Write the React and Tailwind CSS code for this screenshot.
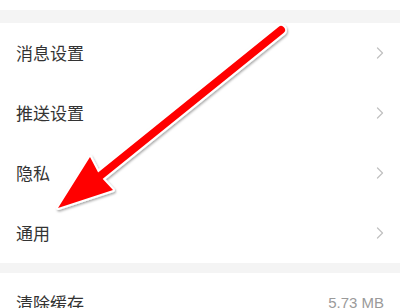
import React from 'react'

const rows = ['消息设置', '推送设置', '隐私', '通用']

function Chevron() {
  return (
    <svg width="8" height="12" viewBox="0 0 8 12" fill="none">
      <path d="M1.5 1 L6.5 6 L1.5 11" stroke="#c2c2c2" strokeWidth="1.3" strokeLinecap="round" strokeLinejoin="round" />
    </svg>
  )
}

export default function App() {
  return (
    <div className="relative w-[400px] h-[308px] overflow-hidden bg-white font-['Noto_Sans_CJK_SC','Noto_Sans',sans-serif]">
      <div className="h-[10px] bg-white" />
      <div className="h-[13px] bg-[#f4f4f4]" />
      {rows.map(label => (
        <div key={label} className="h-[60px] flex items-center justify-between pl-4 pr-4">
          <span className="text-[17px] text-[#333333]">{label}</span>
          <Chevron />
        </div>
      ))}
      <div className="h-[10px] bg-[#f4f4f4]" />
      <div className="h-[60px] flex items-center justify-between pl-4 pr-4">
        <span className="text-[17px] text-[#333333]">清除缓存</span>
        <span className="text-[15px] text-[#9a9a9a] font-['Liberation_Sans',sans-serif]">5.73 MB</span>
      </div>

      <svg className="absolute inset-0 pointer-events-none" width="400" height="308" viewBox="0 0 400 308">
        <defs>
          <filter id="sh" x="-20%" y="-20%" width="140%" height="140%">
            <feDropShadow dx="1" dy="1.5" stdDeviation="1.2" floodColor="#000" floodOpacity="0.35" />
          </filter>
        </defs>
        <g filter="url(#sh)">
          <line x1="281" y1="30" x2="100" y2="176" stroke="#ffffff" strokeWidth="12" strokeLinecap="round" />
          <polygon points="58,208 90,157 100,176 113,190" fill="#ffffff" stroke="#ffffff" strokeWidth="4" strokeLinejoin="round" />
        </g>
        <line x1="281" y1="30" x2="100" y2="176" stroke="#ff0000" strokeWidth="8" strokeLinecap="round" />
        <polygon points="58,208 90,157 100,176 113,190" fill="#ff0000" />
      </svg>
    </div>
  )
}
